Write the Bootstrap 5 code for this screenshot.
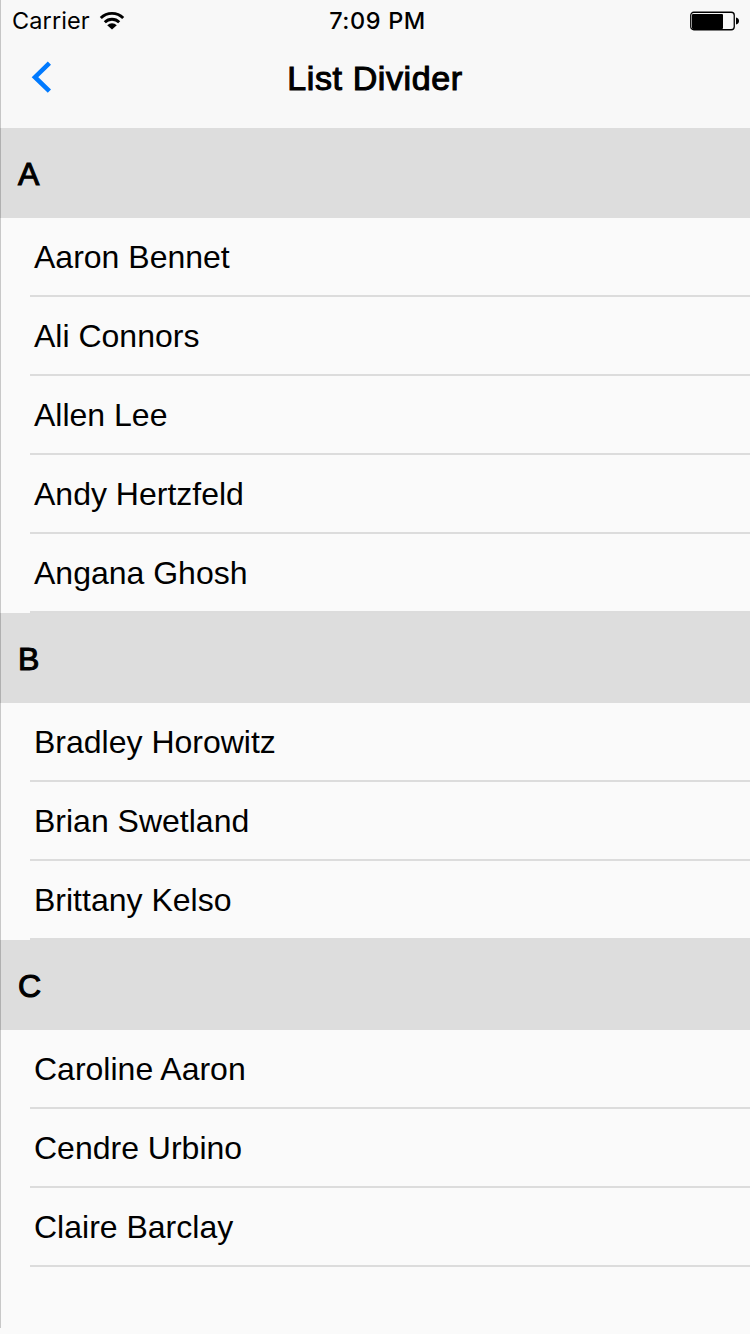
<!DOCTYPE html>
<html lang="en">
<head>
<meta charset="utf-8">
<meta name="viewport" content="width=device-width, initial-scale=1">
<title>List Divider</title>
<link href="https://cdn.jsdelivr.net/npm/bootstrap@5.3.0/dist/css/bootstrap.min.css" rel="stylesheet">
<style>
body { background: #fafafa; color: #000; font-family: "Liberation Sans", Arial, sans-serif; font-size: 32px; }
.screen { height: 1334px; }
.edge { width: 1px; height: 1328px; background: rgba(0,0,0,.2); z-index: 5; }
.topbar { height: 128px; background: #f8f8f8; }
.statusbar { height: 40px; padding: 0 11px 0 12px; font-family: Inter, sans-serif; font-size: 23.5px; line-height: 41px; }
.carrier { letter-spacing: .1px; }
.clock { font-weight: 500; letter-spacing: .6px; margin-left: 4px; }
.wifi { margin-left: 9px; }
.titlebar { height: 76px; }
.medium { font-weight: 400; -webkit-text-stroke: 1.1px #000; }
.title { font-size: 34px; line-height: 76px; letter-spacing: .62px; }
.back { left: 30px; top: 20px; line-height: 0; }
.divider { height: 90px; background: #ddd; padding: 2px 0 0 18px; font-size: 32px; }
.names { margin-left: 30px; }
.person { height: 79px; line-height: 79px; padding-left: 4px; border-bottom: 2px solid #dcdcdc; }
</style>
</head>
<body>
<div class="screen position-relative overflow-hidden">
  <div class="edge position-absolute top-0 start-0"></div>
  <header class="topbar">
    <div class="statusbar row g-0">
      <div class="col d-flex align-items-center">
        <span class="carrier">Carrier</span>
        <svg class="wifi" width="26" height="20" viewBox="0 0 26 20">
          <g fill="none" stroke="#000" stroke-width="2.9">
            <path d="M1.8 7a15.8 15.8 0 0 1 22.4 0"/>
            <path d="M5.8 11.2a10.2 10.2 0 0 1 14.4 0"/>
          </g>
          <path d="M13 18.6l-4.8-4.4a7 7 0 0 1 9.6 0z"/>
        </svg>
      </div>
      <div class="col-auto clock">7:09 PM</div>
      <div class="col d-flex justify-content-end align-items-center">
        <svg width="49" height="20" viewBox="0 0 49 20">
          <rect x=".75" y="1.25" width="43.5" height="17.5" rx="3" fill="none" stroke="#000" stroke-width="1.3"/>
          <rect x="2" y="3" width="31" height="15" rx="1"/>
          <path d="M46 6.6q3 .8 3 3.4t-3 3.4z"/>
        </svg>
      </div>
    </div>
    <nav class="titlebar position-relative text-center">
      <a class="back position-absolute" href="#" aria-label="Back">
        <svg width="24" height="34" viewBox="0 0 24 34"><path d="M19.4 3.2L5 17.2l14.4 14" fill="none" stroke="#007aff" stroke-width="4.6"/></svg>
      </a>
      <h1 class="title medium m-0">List Divider</h1>
    </nav>
  </header>
  <main>
    <h2 class="divider medium d-flex align-items-center m-0">A</h2>
    <ul class="names list-unstyled mb-0">
      <li class="person">Aaron Bennet</li>
      <li class="person">Ali Connors</li>
      <li class="person">Allen Lee</li>
      <li class="person">Andy Hertzfeld</li>
      <li class="person">Angana Ghosh</li>
    </ul>
    <h2 class="divider medium d-flex align-items-center m-0">B</h2>
    <ul class="names list-unstyled mb-0">
      <li class="person">Bradley Horowitz</li>
      <li class="person">Brian Swetland</li>
      <li class="person">Brittany Kelso</li>
    </ul>
    <h2 class="divider medium d-flex align-items-center m-0">C</h2>
    <ul class="names list-unstyled mb-0">
      <li class="person">Caroline Aaron</li>
      <li class="person">Cendre Urbino</li>
      <li class="person">Claire Barclay</li>
    </ul>
  </main>
</div>
<script src="https://cdn.jsdelivr.net/npm/bootstrap@5.3.0/dist/js/bootstrap.bundle.min.js"></script>
</body>
</html>
